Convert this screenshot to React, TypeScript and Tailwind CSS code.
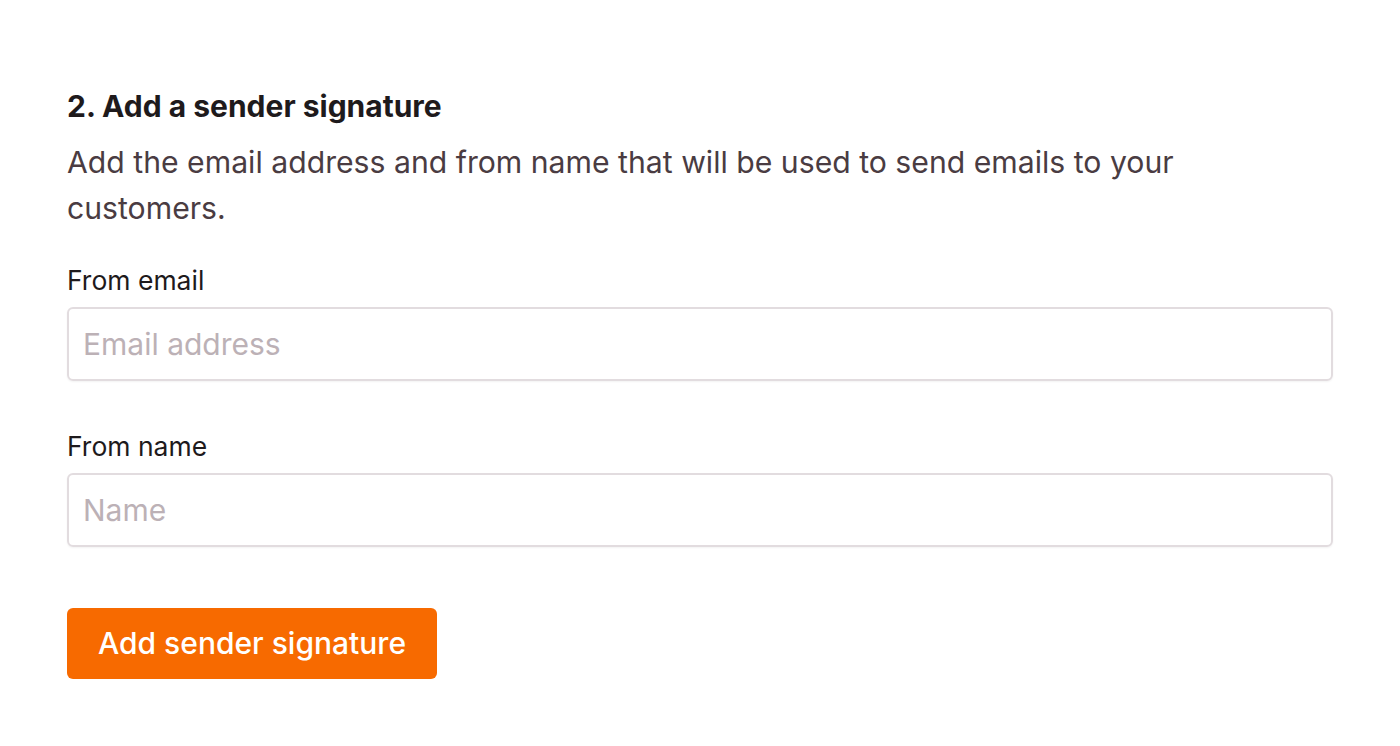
import React from 'react'

const font = { fontFamily: 'Inter, "Noto Sans", sans-serif' }

export default function App() {
    return (
        <div className="min-h-screen bg-white" style={font}>
            <div className="px-[67px] pt-[86px]">
                <h2 className="text-[30px] leading-[40px] font-bold text-[#1e1a1c]">2. Add a sender signature</h2>
                <p className="mt-[13px] max-w-[1200px] text-[30.2px] leading-[46px] text-[#4a3c42]">
                    Add the email address and from name that will be used to send emails to your customers.
                </p>

                <div className="mt-[33px] flex flex-col">
                    <label className="text-[26.5px] leading-[32px] text-[#1e1a1c]">From email</label>
                    <input
                        type="email"
                        placeholder="Email address"
                        className="mt-[11px] h-[74px] w-full rounded-[6px] border-2 border-[#e2dcdf] px-[14px] text-[30px] text-[#1e1a1c] placeholder:text-[#bcb1b6] outline-none shadow-[0_1px_2px_rgba(0,0,0,0.05)]"
                    />
                </div>

                <div className="mt-[49px] flex flex-col">
                    <label className="text-[26.5px] leading-[32px] text-[#1e1a1c]">From name</label>
                    <input
                        type="text"
                        placeholder="Name"
                        className="mt-[11px] h-[74px] w-full rounded-[6px] border-2 border-[#e2dcdf] px-[14px] text-[30px] text-[#1e1a1c] placeholder:text-[#bcb1b6] outline-none shadow-[0_1px_2px_rgba(0,0,0,0.05)]"
                    />
                </div>

                <button className="mt-[61px] h-[71px] rounded-[6px] bg-[#f76a00] px-[31px] text-[30px] font-medium text-white">
                    Add sender signature
                </button>
            </div>
        </div>
    )
}
